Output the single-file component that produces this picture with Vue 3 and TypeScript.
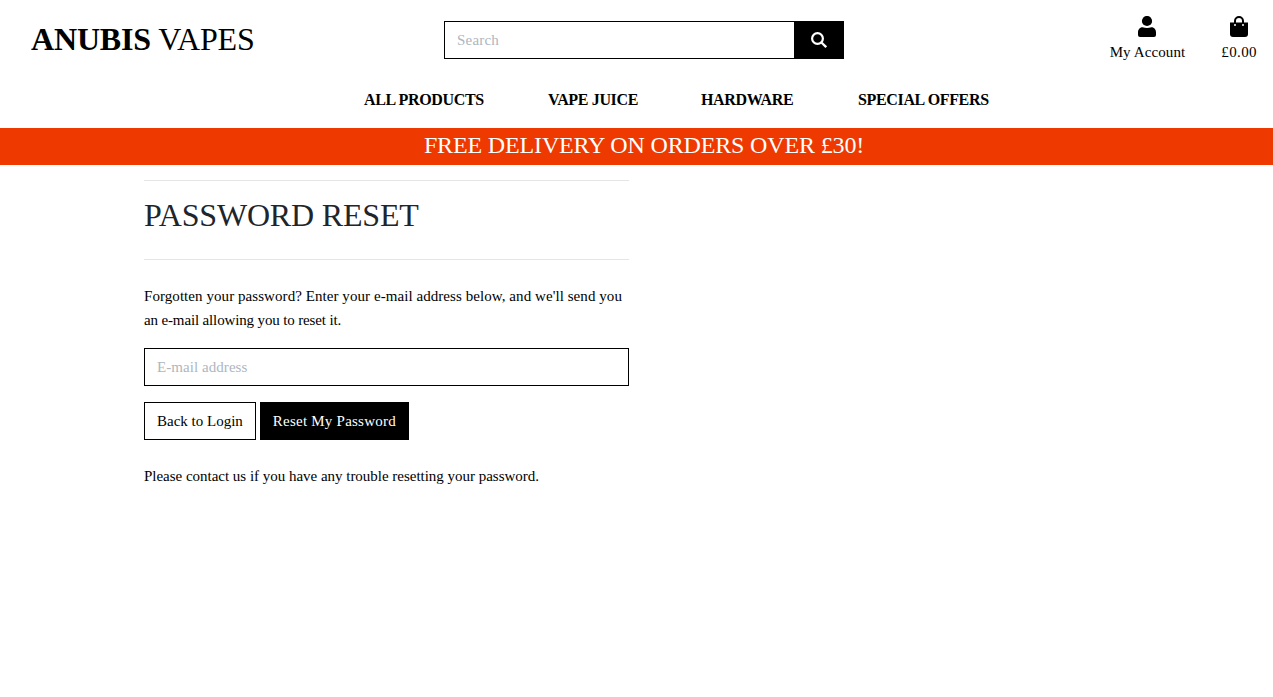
<script setup lang="ts">
import { ref } from 'vue'

const search = ref('')
const email = ref('')
const links: string[] = ['ALL PRODUCTS', 'VAPE JUICE', 'HARDWARE', 'SPECIAL OFFERS']
</script>

<template>
  <div class="page">
    <header class="header">
      <a class="brand"><strong>ANUBIS</strong> VAPES</a>
      <form class="search" @submit.prevent>
        <input v-model="search" type="text" placeholder="Search" />
        <button type="submit" aria-label="Search">
          <svg viewBox="0 0 16 16" width="16" height="16" fill="none" stroke="currentColor"><circle cx="6.500" cy="6.500" r="5.400" stroke-width="2.200" /><path d="M10.200 10.200L15.200 15.200" stroke-width="2.300" /></svg>
        </button>
      </form>
      <div class="tools">
        <a class="tool">
          <svg viewBox="0 0 18 21" width="18" height="21"><circle cx="9" cy="5" r="5.100" /><path d="M4.500 11.200C6 11.700 7.500 12 9 12s3-.3 4.500-.8c2.500 0 4.500 2.300 4.500 5V19a2 2 0 0 1-2 2H2a2 2 0 0 1-2-2v-2.800c0-2.700 2-5 4.500-5z" /></svg>
          <span>My Account</span>
        </a>
        <a class="tool cart">
          <svg viewBox="0 0 18 21" width="18" height="21"><path d="M0 6.500h18V18a3 3 0 0 1-3 3H3a3 3 0 0 1-3-3z" /><path d="M5 8V5a4 4 0 0 1 8 0v3" fill="none" stroke="#000" stroke-width="2" /><circle cx="5" cy="9" r="1" fill="#fff" /><circle cx="13" cy="9" r="1" fill="#fff" /></svg>
          <span>£0.00</span>
        </a>
      </div>
    </header>
    <nav class="nav">
      <a v-for="link in links" :key="link">{{ link }}</a>
    </nav>
    <div class="banner">FREE DELIVERY ON ORDERS OVER £30!</div>
    <main class="content">
      <hr />
      <h2>PASSWORD RESET</h2>
      <hr />
      <p class="intro">Forgotten your password? Enter your e-mail address below, and we'll send you <span>an e-mail allowing you to reset it.</span></p>
      <form @submit.prevent>
        <input v-model="email" class="email" type="email" placeholder="E-mail address" />
        <div class="actions">
          <a class="btn">Back to Login</a>
          <button class="btn dark" type="submit">Reset My Password</button>
        </div>
      </form>
      <p class="help">Please contact us if you have any trouble resetting your password.</p>
    </main>
  </div>
</template>

<style>
body {
  background: #fff;
}
</style>

<style scoped>
.page,
.page * {
  box-sizing: border-box;
}
.page {
  min-height: 697px;
  overflow: hidden;
  font-family: "Liberation Serif", serif;
  font-size: 15px;
  line-height: 24px;
  color: #000;
}
.header {
  display: grid;
  grid-template-columns: 444px 400px 1fr;
  height: 80px;
}
.brand {
  padding: 15px 0 0 31px;
  font-size: 32px;
  letter-spacing: -0.17px;
  line-height: 48px;
  white-space: nowrap;
}
.search {
  display: flex;
  height: 38px;
  margin-top: 21px;
}
input {
  padding: 6px 12px;
  border: 1px solid #000;
  border-radius: 0;
  background: #fff;
  color: #000;
  font: inherit;
  letter-spacing: 0.06px;
  outline: none;
}
input::placeholder {
  color: #aeb6be;
  opacity: 1;
}
.search input {
  width: 351px;
  letter-spacing: 0.2px;
}
.search button {
  display: flex;
  flex: 1;
  align-items: center;
  justify-content: center;
  padding: 0 2px 0 0;
  border: 0;
  background: #000;
  color: #fff;
}
.tools {
  display: flex;
  justify-content: flex-end;
  gap: 36px;
  padding: 16px 16px 0 0;
}
.tool {
  display: flex;
  flex-direction: column;
  align-items: center;
  letter-spacing: 0.1px;
  white-space: nowrap;
}
.cart {
  letter-spacing: 0.4px;
}
.tool span {
  margin-top: 3px;
}
.nav {
  display: grid;
  grid-template-columns: 184px 153px 157px auto;
  height: 48px;
  padding: 8px 0 0 364px;
  font-size: 16px;
  font-weight: 700;
  letter-spacing: -0.35px;
  white-space: nowrap;
}
.banner {
  height: 37px;
  padding-left: 15px;
  background: #ee3900;
  color: #fff;
  font-size: 24px;
  letter-spacing: -0.15px;
  line-height: 34px;
  text-align: center;
}
.content {
  width: 485px;
  margin-left: 144px;
  padding-top: 15px;
}
hr {
  height: 1px;
  margin: 0;
  border: 0;
  background: #e5e5e5;
}
h2 {
  margin: 15px 0 25px;
  color: #212529;
  font-size: 32px;
  font-weight: 400;
  letter-spacing: -0.17px;
  line-height: 38px;
}
p {
  margin: 0;
}
.intro {
  margin: 24px 0 16px;
  letter-spacing: 0.065px;
}
.intro span {
  letter-spacing: -0.14px;
}
.email {
  display: block;
  width: 100%;
  height: 38px;
}
.actions {
  display: flex;
  gap: 4px;
  margin: 16px 0 24px;
}
.btn {
  height: 38px;
  padding: 6px 12px;
  border: 1px solid #000;
  background: #fff;
  color: #000;
  font: inherit;
  white-space: nowrap;
}
.btn.dark {
  background: #000;
  color: #fff;
  letter-spacing: 0.23px;
}
.help {
  letter-spacing: -0.018px;
}
</style>
